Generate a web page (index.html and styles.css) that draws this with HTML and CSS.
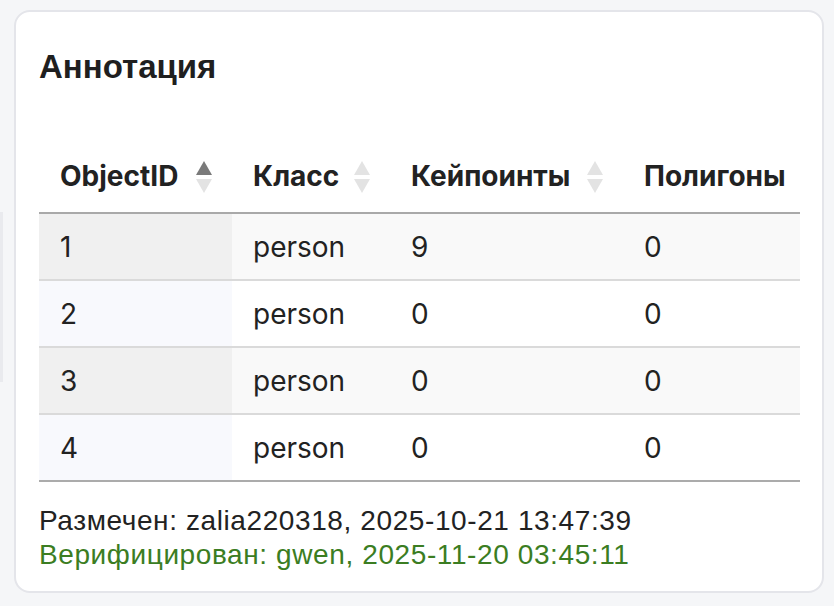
FILE: index.html
```html
<!DOCTYPE html>
<html lang="ru">
<head>
<meta charset="utf-8">
<title>Аннотация</title>
<link rel="stylesheet" href="styles.css">
</head>
<body>
<div class="card">
  <h2 class="title">Аннотация</h2>
  <table class="ann">
    <colgroup>
      <col class="c1"><col class="c2"><col class="c3"><col class="c4">
    </colgroup>
    <thead>
      <tr>
        <th><div class="th-in"><span>ObjectID</span><span class="sort active"><i class="up"></i><i class="down"></i></span></div></th>
        <th><div class="th-in"><span>Класс</span><span class="sort"><i class="up"></i><i class="down"></i></span></div></th>
        <th><div class="th-in"><span>Кейпоинты</span><span class="sort"><i class="up"></i><i class="down"></i></span></div></th>
        <th><div class="th-in"><span>Полигоны</span></div></th>
      </tr>
    </thead>
    <tbody>
      <tr class="odd"><td>1</td><td>person</td><td>9</td><td>0</td></tr>
      <tr class="even"><td>2</td><td>person</td><td>0</td><td>0</td></tr>
      <tr class="odd"><td>3</td><td>person</td><td>0</td><td>0</td></tr>
      <tr class="even"><td>4</td><td>person</td><td>0</td><td>0</td></tr>
    </tbody>
  </table>
  <div class="meta">
    <div class="marked">Размечен: zalia220318, 2025-10-21 13:47:39</div>
    <div class="verified">Верифицирован: gwen, 2025-11-20 03:45:11</div>
  </div>
</div>
</body>
</html>
```
FILE: styles.css
```css
html, body {
  margin: 0;
  padding: 0;
}
body {
  background: linear-gradient(#e9eaee, #e9eaee) no-repeat 0 212px / 3px 170px, #f5f6f8;
  padding: 10px 10px 0 14px;
  font-family: "Liberation Sans", Arial, sans-serif;
  color: #222;
}
.card {
  background: #fff;
  border: 2px solid #e4e5ea;
  border-radius: 16px;
  box-sizing: border-box;
  height: 583px;
  padding: 0 22px 0 23px;
}
.title {
  margin: 36px 0 0;
  font-size: 33px;
  line-height: 38px;
  font-weight: 700;
  color: #1f1f1f;
}
.ann {
  margin-top: 52px;
  width: 761px;
  border-collapse: collapse;
  table-layout: fixed;
  font-family: Inter, "Noto Sans", sans-serif;
  font-size: 28px;
  color: #222;
}
.c1 { width: 193px; }
.c2 { width: 158px; }
.c3 { width: 233px; }
.c4 { width: 177px; }
.ann th {
  text-align: left;
  font-weight: 700;
  padding: 21px 20px 19px 21px;
  line-height: 33px;
  border-bottom: 2px solid #a9a9a9;
}
.th-in {
  display: flex;
  align-items: center;
  justify-content: space-between;
}
.sort {
  display: flex;
  flex-direction: column;
  gap: 4px;
  width: 16px;
  margin-top: 2px;
}
.sort i {
  display: block;
  width: 0;
  height: 0;
  border-left: 8px solid transparent;
  border-right: 8px solid transparent;
}
.sort .up { border-bottom: 14px solid #e3e3e3; }
.sort .down { border-top: 14px solid #e3e3e3; }
.sort.active .up { border-bottom-color: #7a7a7a; }
.ann td {
  padding: 17px 20px 15px 21px;
  line-height: 33px;
  border-top: 2px solid #dadada;
}
.ann tbody tr:first-child td { border-top: none; }
.ann tbody tr:last-child td { border-bottom: 2px solid #ababab; }
.ann tr.odd td { background: #f9f9f9; }
.ann tr.odd td:first-child { background: #f0f0f0; }
.ann tr.even td { background: #fff; }
.ann tr.even td:first-child { background: #f8f9fd; }
.meta {
  margin-top: 22px;
  font-size: 28px;
  line-height: 34px;
  letter-spacing: 0.6px;
}
.marked { color: #222; }
.verified { color: #3b7d22; }
```
